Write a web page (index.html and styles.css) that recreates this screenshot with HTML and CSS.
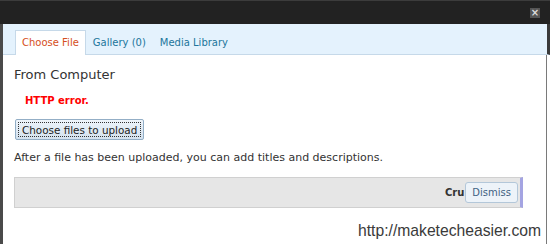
FILE: index.html
```html
<!DOCTYPE html>
<html lang="en">
<head>
  <meta charset="UTF-8" />
  <title>Add Media</title>
  <link rel="stylesheet" href="styles.css">
</head>
<body>
  <div class="titlebar">
    <span class="close">&times;</span>
  </div>

  <div class="frame">
    <div class="tabs">
      <a class="tab current">Choose File</a>
      <a class="tab">Gallery (0)</a>
      <a class="tab">Media Library</a>
    </div>

    <div class="panel">
      <h3>From Computer</h3>
      <div class="error">HTTP error.</div>
      <button class="upload">Choose files to upload</button>
      <p class="note">After a file has been uploaded, you can add titles and descriptions.</p>

      <div class="media-item">
        <span class="filename">Cru</span>
        <button class="dismiss">Dismiss</button>
      </div>
    </div>
  </div>

  <div class="credit">http://maketecheasier.com</div>
</body>
</html>
```

FILE: styles.css
```css
body {
  margin: 0;
  width: 550px;
  height: 244px;
  overflow: hidden;
  background: #fff;
  font-family: 'DejaVu Sans', Verdana, sans-serif;
  color: #333;
  position: relative;
}

.titlebar {
  height: 23px;
  background-color: #222;
  border-top: 1px solid #3c3c3c;
  display: flex;
  justify-content: flex-end;
  align-items: center;
  padding-right: 10px;
}

.close {
  width: 10px;
  height: 10px;
  background-color: #555;
  color: #ddd;
  font-size: 10px;
  line-height: 10px;
  text-align: center;
  font-weight: bold;
}

.frame {
  border-left: 3px solid #4a4a4a;
  height: 220px;
  display: flex;
  flex-direction: column;
}

.tabs {
  height: 23px;
  padding: 7px 0 0 12px;
  background-color: #e4f2fd;
  border-bottom: 1px solid #c6d9e9;
  border-right: 3px solid #3a3a3a;
  display: flex;
  align-items: flex-end;
}

.tab {
  font-size: 10px;
  line-height: 23px;
  padding: 0 6px;
  color: #21759b;
  border: 1px solid transparent;
  border-bottom: none;
}

.tab.current {
  background-color: #fff;
  color: #d54e21;
  border-color: #c6d9e9;
  margin-bottom: -1px;
  line-height: 24px;
}

.panel {
  flex: 1;
  margin-right: 3px;
  border-right: 1px solid #7a7a7a;
  padding: 12px 23px 0 11px;
}

h3 {
  margin: 0;
  font-size: 13px;
  line-height: 16px;
  font-weight: normal;
  color: #333;
}

.error {
  margin: 11px 0 0 11px;
  font-size: 10px;
  line-height: 14px;
  font-weight: bold;
  color: #f00;
}

.upload {
  display: block;
  margin: 11px 0 0 1px;
  height: 21px;
  padding: 0 6px;
  font-family: 'DejaVu Sans', Verdana, sans-serif;
  font-size: 10.4px;
  color: #222;
  background: linear-gradient(#eef4fa, #d3e1ee);
  border: 1px solid #93aec6;
  border-radius: 2px;
  outline: 1px dotted #333;
  outline-offset: -4px;
}

.note {
  margin: 11px 0 0 0;
  font-size: 11px;
  line-height: 14px;
  color: #333;
}

.media-item {
  margin-top: 12px;
  height: 21px;
  padding: 4px 2px 4px 0;
  background-color: #e6e6e6;
  border: 1px solid #d0d0d0;
  border-right: 3px solid #a4a4e2;
  display: flex;
  justify-content: flex-end;
  align-items: center;
}

.filename {
  font-size: 10px;
  font-weight: bold;
  color: #333;
  margin-right: 1px;
}

.dismiss {
  height: 21px;
  padding: 0 6px;
  font-family: 'DejaVu Sans', Verdana, sans-serif;
  font-size: 10px;
  color: #3f6283;
  background-color: #edf3f9;
  border: 1px solid #b3c7d9;
  border-radius: 3px;
}

.credit {
  position: absolute;
  left: 358px;
  top: 222px;
  font-family: 'Liberation Sans', Arial, sans-serif;
  font-size: 15.7px;
  color: #3a3a3a;
}
```
